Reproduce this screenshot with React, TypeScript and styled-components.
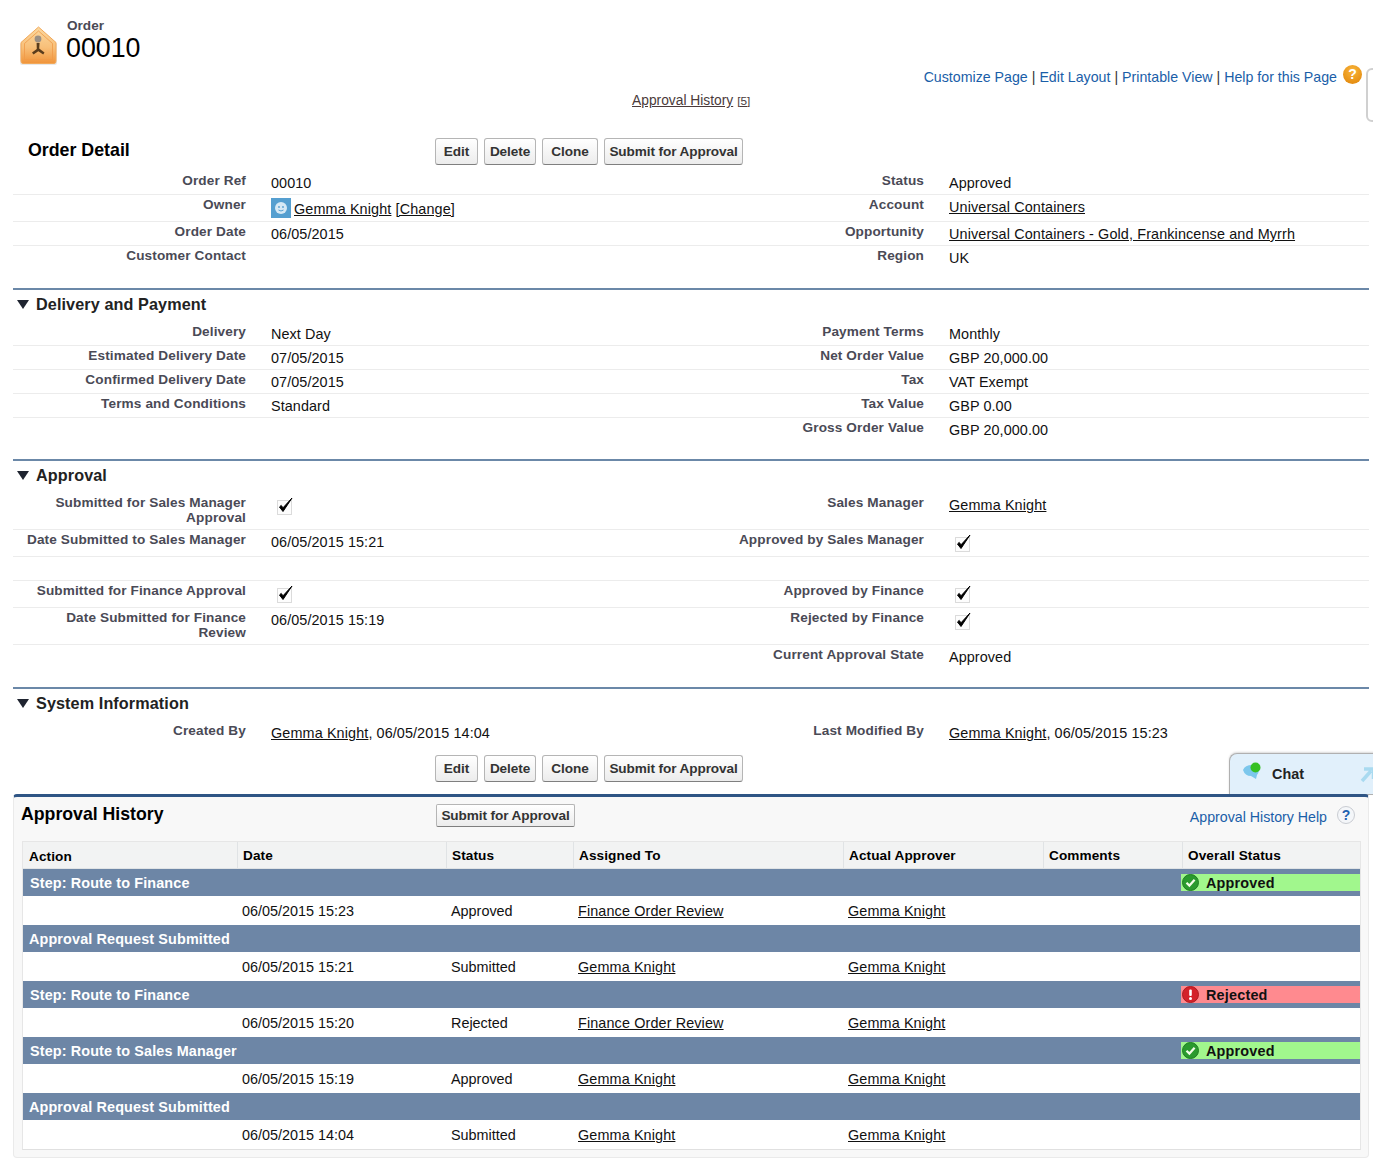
import React from "react";
import styled, { createGlobalStyle } from "styled-components";

const Global = createGlobalStyle`
  html, body { margin: 0; padding: 0; background: #fff; }
  body { font-family: "Liberation Sans", Arial, sans-serif; color: #111; overflow: hidden; }
`;

const Page = styled.div`
  position: relative;
  width: 1373px;
  height: 1159px;
  overflow: hidden;
`;

const TopBar = styled.header`
  display: flex;
  justify-content: space-between;
  align-items: flex-start;
  height: 92px;
  padding: 0 11px 0 18px;
  box-sizing: border-box;
`;

const TitleBlock = styled.div`
  display: flex;
  align-items: flex-start;
  gap: 6px;
  padding-top: 18px;
`;

const TitleText = styled.div`
  display: flex;
  flex-direction: column;
`;

const TypeName = styled.span`
  font-size: 13.6px;
  font-weight: bold;
  line-height: 16px;
  color: #4a4a56;
  margin-left: 1px;
`;

const RecordName = styled.span`
  font-size: 26.8px;
  line-height: 29px;
  color: #000;
`;

const HouseIcon = styled.svg`
  width: 42px;
  height: 42px;
  margin-top: 7px;
`;

const PageLinks = styled.nav`
  display: flex;
  align-items: center;
  margin-top: 67px;
  font-size: 14.2px;
  line-height: 20px;
  color: #333;
`;

const BlueLink = styled.a`
  color: #1a5ea8;
  text-decoration: none;
`;

const Pipe = styled.span`
  margin: 0 4px;
`;

const OrangeHelp = styled.span`
  display: inline-flex;
  align-items: center;
  justify-content: center;
  width: 19px;
  height: 19px;
  margin: -6px 0 0 6px;
  border-radius: 50%;
  background: radial-gradient(circle at 50% 30%, #f9b53a, #df8207);
  color: #fff;
  font-size: 14px;
  font-weight: bold;
`;

const JumpRow = styled.div`
  height: 34px;
  padding-left: 632px;
  font-size: 13.8px;
  line-height: 18px;
`;

const JumpLink = styled.a`
  color: #4a3a3a;
  text-decoration: underline;
`;

const JumpCount = styled.span`
  font-size: 11.8px;
  margin-left: 4px;
  color: #4a3a3a;
  text-decoration: underline;
`;

const Detail = styled.section`
  margin: 0 4px 0 13px;
`;

const DetailHead = styled.div`
  display: flex;
  align-items: flex-start;
  height: 45px;
  padding-top: 12px;
  box-sizing: border-box;
`;

const DetailTitle = styled.h2`
  width: 407px;
  margin: 1px 0 0 15px;
  font-size: 17.8px;
  line-height: 22px;
  color: #000;
`;

const Buttons = styled.div`
  display: flex;
  gap: 6px;
`;

const Btn = styled.button<{ $w: number }>`
  width: ${(p) => p.$w}px;
  height: 27px;
  padding: 0;
  box-sizing: border-box;
  border: 1px solid #b5b5b5;
  border-bottom-color: #7f7f7f;
  border-radius: 3px;
  background: linear-gradient(#ffffff, #ececec);
  font-family: inherit;
  font-size: 13.6px;
  font-weight: bold;
  letter-spacing: -0.1px;
  color: #333;
  white-space: nowrap;
`;

const BottomButtons = styled(Buttons)`
  height: 27px;
  margin: 10px 0 12px 422px;
`;

const Row = styled.div<{ $h: number; $line?: boolean }>`
  display: grid;
  grid-template-columns: 233px 433px 245px 445px;
  height: ${(p) => p.$h}px;
  box-sizing: border-box;
  border-bottom: ${(p) => (p.$line === false ? "none" : "1px solid #ececec")};
`;

const Label = styled.div`
  padding: 2px 0 0 10px;
  text-align: right;
  font-size: 13.6px;
  font-weight: bold;
  line-height: 15px;
  letter-spacing: 0.12px;
  color: #4a4a56;
`;

const Value = styled.div`
  padding: 3px 0 0 25px;
  font-size: 14.4px;
  line-height: 18px;
  letter-spacing: 0.08px;
  color: #111;
`;

const TextLink = styled.a`
  color: #111;
  letter-spacing: 0.12px;
  text-decoration: underline;
`;

const Avatar = styled.svg`
  width: 20px;
  height: 20px;
  flex: none;
`;

const OwnerLine = styled.div`
  display: flex;
  align-items: flex-end;
  gap: 3px;
  height: 20px;
`;

const CheckSvg = styled.svg`
  display: block;
  width: 20px;
  height: 20px;
  margin: -1px 0 0 4px;
`;

const SectionHead = styled.div<{ $top: number }>`
  display: flex;
  align-items: center;
  gap: 7px;
  height: 27px;
  margin-top: ${(p) => p.$top}px;
  padding: 0 0 5px 4px;
  border-top: 2px solid #6b88a8;
`;

const SectionTitle = styled.h3`
  margin: 0;
  font-size: 16.2px;
  line-height: 20px;
  letter-spacing: 0.1px;
  color: #222;
`;

const Tri = styled.span`
  width: 0;
  height: 0;
  margin-top: 1px;
  border-left: 6px solid transparent;
  border-right: 6px solid transparent;
  border-top: 9px solid #1f2430;
`;

const Panel = styled.section`
  position: relative;
  z-index: 2;
  margin: 0 4px 0 13px;
  height: 364px;
  box-sizing: border-box;
  padding: 0 7px 0 8px;
  background: #f8f8f8;
  border: 1px solid #eaeaea;
  border-top: 3px solid #2f5585;
  border-radius: 4px;
`;

const PanelHead = styled.div`
  display: flex;
  align-items: flex-start;
  height: 44px;
`;

const PanelTitle = styled.h2`
  width: 415px;
  margin: 5px 0 0 -1px;
  font-size: 17.7px;
  line-height: 24px;
  color: #000;
`;

const SmallBtn = styled(Btn)`
  height: 23px;
  margin-top: 7px;
  border-radius: 2px;
`;

const HelpLinks = styled.div`
  display: flex;
  align-items: center;
  margin: 11px 6px 0 auto;
  font-size: 14.2px;
  line-height: 18px;
`;

const BlueHelp = styled.span`
  display: inline-flex;
  align-items: center;
  justify-content: center;
  width: 16px;
  height: 16px;
  margin: -5px 0 0 10px;
  border: 1px solid #c9ccd2;
  border-radius: 50%;
  background: #f4f6f9;
  color: #1f62b0;
  font-size: 14px;
  font-weight: bold;
`;

const Table = styled.div`
  border: 1px solid #e6e6e6;
  border-bottom-color: #e0e0e0;
  background: #fff;
`;

const COLS = "214px 209px 127px 270px 200px 139px 178px";

const HeadRow = styled.div`
  display: grid;
  grid-template-columns: ${COLS};
  height: 26px;
  background: #f2f3f3;
  border-bottom: 1px solid #e0e3e5;
`;

const HeadCell = styled.div`
  padding: 5px 0 0 5px;
  border-left: 1px solid #e0e3e5;
  font-size: 13.6px;
  font-weight: bold;
  line-height: 18px;
  letter-spacing: 0.1px;
  color: #000;
  &:first-child { border-left: none; padding-left: 6px; padding-top: 6px; }
`;

const StepRow = styled.div`
  display: grid;
  grid-template-columns: 1fr 179px;
  height: 27px;
  background: #6d86a6;
  border-bottom: 1px solid #fff;
`;

const StepName = styled.div<{ $indent: number }>`
  padding: 5px 0 0 ${(p) => p.$indent}px;
  font-size: 14.4px;
  font-weight: bold;
  line-height: 18px;
  letter-spacing: 0.13px;
  color: #fff;
`;

const Status = styled.div<{ $bg: string }>`
  display: flex;
  align-items: center;
  gap: 7px;
  height: 17px;
  margin-top: 5px;
  padding-left: 1px;
  background: ${(p) => p.$bg};
  font-size: 14.4px;
  font-weight: bold;
  letter-spacing: 0.2px;
  color: #111;
`;

const StatusIcon = styled.svg`
  width: 17px;
  height: 17px;
  flex: none;
`;

const DataRow = styled.div`
  display: grid;
  grid-template-columns: ${COLS};
  height: 28px;
  box-sizing: border-box;
  border-bottom: 1px solid #fff;
  background: #fff;
`;

const DataCell = styled.div`
  padding: 5px 0 0 5px;
  font-size: 14.4px;
  line-height: 18px;
  color: #111;
`;

const ChatTab = styled.div`
  position: absolute;
  left: 1229px;
  top: 753px;
  z-index: 1;
  display: flex;
  align-items: center;
  gap: 8px;
  width: 150px;
  height: 42px;
  padding: 0 0 0 12px;
  box-sizing: border-box;
  background: #e1f0fb;
  border: 1px solid #b0b0b0;
  border-right: none;
  border-radius: 8px 0 0 0;
  box-shadow: 0 -1px 2px rgba(0, 0, 0, 0.15);
`;

const ChatLabel = styled.span`
  width: 79px;
  font-size: 14.4px;
  font-weight: bold;
  color: #222;
`;

const ChatIcon = styled.svg`
  width: 22px;
  height: 22px;
  margin-top: -4px;
`;

const ChatArrow = styled.svg`
  width: 18px;
  height: 18px;
  flex: none;
`;

const SideHandle = styled.div`
  position: absolute;
  left: 1366px;
  top: 68px;
  width: 14px;
  height: 54px;
  border: 2px solid #d0d0d0;
  border-radius: 6px;
  box-sizing: border-box;
`;

const Check = () => (
  <CheckSvg viewBox="0 0 20 20">
    <rect x="2.5" y="5.5" width="14" height="14" fill="#fdfdfd" stroke="#b8b8b8" strokeDasharray="1 1" />
    <path d="M4.5 12 L8 16.5 L17 3 L8 12.8 L6.2 10.4 Z" fill="#000" stroke="#000" strokeWidth="1" strokeLinejoin="round" />
  </CheckSvg>
);

const OkIcon = () => (
  <StatusIcon viewBox="0 0 17 17">
    <circle cx="8.5" cy="8.5" r="8" fill="#2a9a2e" stroke="#1f7d22" />
    <path d="M4.5 8.8 L7.4 11.6 L12.6 5.8" fill="none" stroke="#f3fbe8" strokeWidth="2.2" />
  </StatusIcon>
);

const RejectIcon = () => (
  <StatusIcon viewBox="0 0 17 17">
    <circle cx="8.5" cy="8.5" r="8" fill="#d4212a" stroke="#aa1a20" />
    <rect x="7.2" y="3.4" width="2.6" height="6.6" rx="1" fill="#fff" />
    <circle cx="8.5" cy="12.4" r="1.5" fill="#fff" />
  </StatusIcon>
);

type Step = { kind: "step"; name: string; indent: number; status?: "Approved" | "Rejected" };
type Data = { kind: "data"; date: string; status: string; to: string };

const history: (Step | Data)[] = [
  { kind: "step", name: "Step: Route to Finance", indent: 7, status: "Approved" },
  { kind: "data", date: "06/05/2015 15:23", status: "Approved", to: "Finance Order Review" },
  { kind: "step", name: "Approval Request Submitted", indent: 6 },
  { kind: "data", date: "06/05/2015 15:21", status: "Submitted", to: "Gemma Knight" },
  { kind: "step", name: "Step: Route to Finance", indent: 7, status: "Rejected" },
  { kind: "data", date: "06/05/2015 15:20", status: "Rejected", to: "Finance Order Review" },
  { kind: "step", name: "Step: Route to Sales Manager", indent: 7, status: "Approved" },
  { kind: "data", date: "06/05/2015 15:19", status: "Approved", to: "Gemma Knight" },
  { kind: "step", name: "Approval Request Submitted", indent: 6 },
  { kind: "data", date: "06/05/2015 14:04", status: "Submitted", to: "Gemma Knight" },
];

const ActionButtons = () => (
  <>
    <Btn $w={43}>Edit</Btn>
    <Btn $w={52}>Delete</Btn>
    <Btn $w={56}>Clone</Btn>
    <Btn $w={139}>Submit for Approval</Btn>
  </>
);

export default function App() {
  return (
    <Page>
      <Global />
      <TopBar>
        <TitleBlock>
          <HouseIcon viewBox="0 0 42 42">
            <defs>
              <linearGradient id="house" x1="0" y1="0" x2="0" y2="1">
                <stop offset="0" stopColor="#fbd9a0" />
                <stop offset="0.55" stopColor="#f8c07a" />
                <stop offset="1" stopColor="#f0943a" />
              </linearGradient>
            </defs>
            <path d="M20.5 3 L39 19 V38 Q39 40 37 40 H4 Q2 40 2 38 V19 Z" fill="#d8d8d8" opacity="0.6" />
            <path d="M20.5 2 L38 17.500 V36 Q38 38.500 36 38.500 H5 Q3 38.500 3 36 V17.500 Z" fill="url(#house)" stroke="#f2a95a" />
            <path d="M20.5 6 L34.500 18.500 V34.500 H6.500 V18.500 Z" fill="none" stroke="#f09a48" strokeWidth="1" opacity="0.8" />
            <circle cx="20" cy="14" r="3.400" fill="#9a8f84" />
            <path d="M18.600 18 H21.600 L21.200 23.500 L26.500 27.500 L25.200 29.500 L20.300 26.300 L15.500 29.500 L14 27.500 L18.800 24 Z" fill="#5a3c1c" />
          </HouseIcon>
          <TitleText>
            <TypeName>Order</TypeName>
            <RecordName>00010</RecordName>
          </TitleText>
        </TitleBlock>
        <PageLinks>
          <BlueLink>Customize Page</BlueLink>
          <Pipe>|</Pipe>
          <BlueLink>Edit Layout</BlueLink>
          <Pipe>|</Pipe>
          <BlueLink>Printable View</BlueLink>
          <Pipe>|</Pipe>
          <BlueLink>Help for this Page</BlueLink>
          <OrangeHelp>?</OrangeHelp>
        </PageLinks>
      </TopBar>
      <JumpRow>
        <JumpLink>Approval History</JumpLink>
        <JumpCount>[5]</JumpCount>
      </JumpRow>

      <Detail>
        <DetailHead>
          <DetailTitle>Order Detail</DetailTitle>
          <Buttons>
            <ActionButtons />
          </Buttons>
        </DetailHead>

        <Row $h={24}>
          <Label>Order Ref</Label>
          <Value>00010</Value>
          <Label>Status</Label>
          <Value>Approved</Value>
        </Row>
        <Row $h={27}>
          <Label>Owner</Label>
          <Value>
            <OwnerLine>
              <Avatar viewBox="0 0 20 20">
                <rect width="20" height="20" fill="#559fd0" />
                <circle cx="10" cy="10" r="6" fill="#d7e9f5" />
                <circle cx="8" cy="9" r="0.9" fill="#559fd0" />
                <circle cx="12" cy="9" r="0.9" fill="#559fd0" />
                <path d="M7.500 12 Q10 14 12.500 12" stroke="#559fd0" fill="none" />
              </Avatar>
              <span>
                <TextLink>Gemma Knight</TextLink> <TextLink>[Change]</TextLink>
              </span>
            </OwnerLine>
          </Value>
          <Label>Account</Label>
          <Value>
            <TextLink>Universal Containers</TextLink>
          </Value>
        </Row>
        <Row $h={24}>
          <Label>Order Date</Label>
          <Value>06/05/2015</Value>
          <Label>Opportunity</Label>
          <Value>
            <TextLink>Universal Containers - Gold, Frankincense and Myrrh</TextLink>
          </Value>
        </Row>
        <Row $h={24} $line={false}>
          <Label>Customer Contact</Label>
          <Value />
          <Label>Region</Label>
          <Value>UK</Value>
        </Row>

        <SectionHead $top={18}>
          <Tri />
          <SectionTitle>Delivery and Payment</SectionTitle>
        </SectionHead>
        <Row $h={24}>
          <Label>Delivery</Label>
          <Value>Next Day</Value>
          <Label>Payment Terms</Label>
          <Value>Monthly</Value>
        </Row>
        <Row $h={24}>
          <Label>Estimated Delivery Date</Label>
          <Value>07/05/2015</Value>
          <Label>Net Order Value</Label>
          <Value>GBP 20,000.00</Value>
        </Row>
        <Row $h={24}>
          <Label>Confirmed Delivery Date</Label>
          <Value>07/05/2015</Value>
          <Label>Tax</Label>
          <Value>VAT Exempt</Value>
        </Row>
        <Row $h={24}>
          <Label>Terms and Conditions</Label>
          <Value>Standard</Value>
          <Label>Tax Value</Label>
          <Value>GBP 0.00</Value>
        </Row>
        <Row $h={24} $line={false}>
          <Label />
          <Value />
          <Label>Gross Order Value</Label>
          <Value>GBP 20,000.00</Value>
        </Row>

        <SectionHead $top={17}>
          <Tri />
          <SectionTitle>Approval</SectionTitle>
        </SectionHead>
        <Row $h={37}>
          <Label>Submitted for Sales Manager Approval</Label>
          <Value>
            <Check />
          </Value>
          <Label>Sales Manager</Label>
          <Value>
            <TextLink>Gemma Knight</TextLink>
          </Value>
        </Row>
        <Row $h={27}>
          <Label>Date Submitted to Sales Manager</Label>
          <Value>06/05/2015 15:21</Value>
          <Label>Approved by Sales Manager</Label>
          <Value>
            <Check />
          </Value>
        </Row>
        <Row $h={24}>
          <Label />
          <Value />
          <Label />
          <Value />
        </Row>
        <Row $h={27}>
          <Label>Submitted for Finance Approval</Label>
          <Value>
            <Check />
          </Value>
          <Label>Approved by Finance</Label>
          <Value>
            <Check />
          </Value>
        </Row>
        <Row $h={37}>
          <Label>Date Submitted for Finance Review</Label>
          <Value>06/05/2015 15:19</Value>
          <Label>Rejected by Finance</Label>
          <Value>
            <Check />
          </Value>
        </Row>
        <Row $h={24} $line={false}>
          <Label />
          <Value />
          <Label>Current Approval State</Label>
          <Value>Approved</Value>
        </Row>

        <SectionHead $top={18}>
          <Tri />
          <SectionTitle>System Information</SectionTitle>
        </SectionHead>
        <Row $h={24} $line={false}>
          <Label>Created By</Label>
          <Value>
            <TextLink>Gemma Knight</TextLink>, 06/05/2015 14:04
          </Value>
          <Label>Last Modified By</Label>
          <Value>
            <TextLink>Gemma Knight</TextLink>, 06/05/2015 15:23
          </Value>
        </Row>
        <BottomButtons>
          <ActionButtons />
        </BottomButtons>
      </Detail>

      <Panel>
        <PanelHead>
          <PanelTitle>Approval History</PanelTitle>
          <SmallBtn $w={139}>Submit for Approval</SmallBtn>
          <HelpLinks>
            <BlueLink>Approval History Help</BlueLink>
            <BlueHelp>?</BlueHelp>
          </HelpLinks>
        </PanelHead>
        <Table>
          <HeadRow>
            {["Action", "Date", "Status", "Assigned To", "Actual Approver", "Comments", "Overall Status"].map((h) => (
              <HeadCell key={h}>{h}</HeadCell>
            ))}
          </HeadRow>
          {history.map((r, i) =>
            r.kind === "step" ? (
              <StepRow key={i}>
                <StepName $indent={r.indent}>{r.name}</StepName>
                {r.status && (
                  <Status $bg={r.status === "Approved" ? "#a1f78d" : "#ff8a8f"}>
                    {r.status === "Approved" ? <OkIcon /> : <RejectIcon />}
                    {r.status}
                  </Status>
                )}
              </StepRow>
            ) : (
              <DataRow key={i}>
                <DataCell />
                <DataCell>{r.date}</DataCell>
                <DataCell>{r.status}</DataCell>
                <DataCell>
                  <TextLink>{r.to}</TextLink>
                </DataCell>
                <DataCell>
                  <TextLink>Gemma Knight</TextLink>
                </DataCell>
                <DataCell />
                <DataCell />
              </DataRow>
            )
          )}
        </Table>
      </Panel>

      <SideHandle />
      <ChatTab>
        <ChatIcon viewBox="0 0 22 22">
          <path d="M1 9 Q3 4 10 4 L16 5 Q18 11 15 14 L14 18 L9 15 Q3 15 1 9 Z" fill="#7cc7ec" />
          <circle cx="13.500" cy="6.500" r="5" fill="#35c021" />
        </ChatIcon>
        <ChatLabel>Chat</ChatLabel>
        <ChatArrow viewBox="0 0 18 18">
          <path d="M3 16 L12 6 M5 4 H14.500 V14" fill="none" stroke="#a9daf0" strokeWidth="3.500" />
        </ChatArrow>
      </ChatTab>
    </Page>
  );
}
